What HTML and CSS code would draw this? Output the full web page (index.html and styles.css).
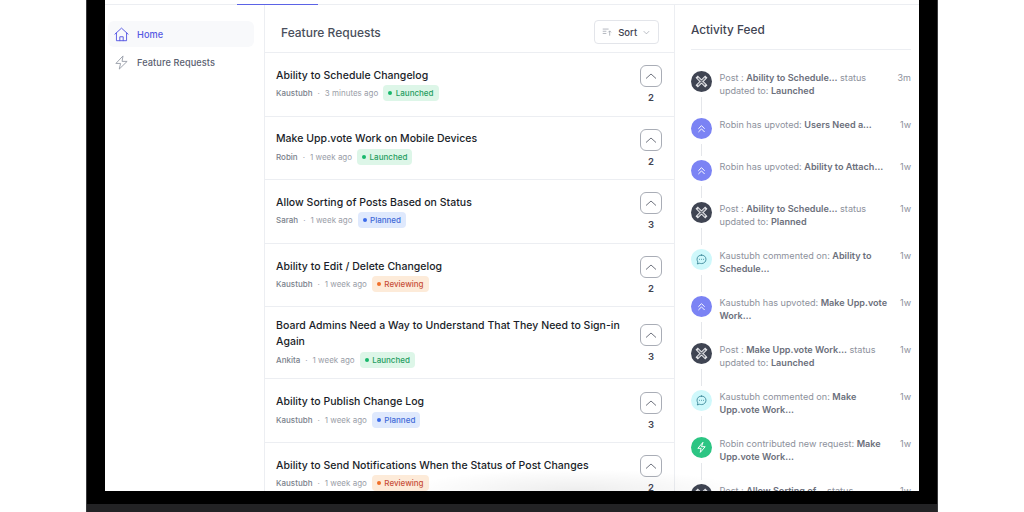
FILE: index.html
```html
<!DOCTYPE html>
<html lang="en">
<head>
  <meta charset="UTF-8">
  <title>Feature Requests</title>
  <link rel="stylesheet" href="styles.css">
</head>
<body>
  <div class="laptop">
    <div class="screen">
      <!-- Top tabs -->
      <div class="tabs"><span class="tab-active"></span></div>

      <div class="columns">
        <!-- Sidebar -->
        <nav class="sidebar">
          <a class="nav-item active">
            <svg class="nav-icon" viewBox="0 0 16 16" fill="none" stroke="currentColor" stroke-width="1" stroke-linejoin="round" stroke-linecap="round"><path d="M1 7.600 8 1.200l7 6.400"/><path d="M2.600 6.400v8.200h10.800V6.400"/><path d="M6.200 14.600v-4.200h3.600v4.200"/></svg>
            Home
          </a>
          <a class="nav-item">
            <svg class="nav-icon" viewBox="0 0 16 16" fill="none" stroke="currentColor" stroke-width="1" stroke-linejoin="round"><path d="M9.600 1 2 9h5l-1.400 6L14 6.800H8.600z"/></svg>
            Feature Requests
          </a>
        </nav>

        <!-- Feature requests -->
        <main class="requests">
          <header class="requests-head">
            <h2>Feature Requests</h2>
            <button class="sort">
              <svg class="sort-icon" viewBox="0 0 14 12" fill="none" stroke="currentColor" stroke-width="1"><path d="M1 2h8M1 5h5M1 8h5M10.500 11V4.500M8.500 6.500l2-2 2 2"/></svg>
              Sort
              <svg class="sort-caret" viewBox="0 0 10 6" fill="none" stroke="currentColor" stroke-width="1"><path d="M1 1l4 4 4-4"/></svg>
            </button>
          </header>

          <article class="request">
            <div class="request-body">
              <h3>Ability to Schedule Changelog</h3>
              <div class="meta"><b>Kaustubh</b><i>·</i><span>3 minutes ago</span><em class="badge launched">Launched</em></div>
            </div>
            <div class="vote"><span class="vote-btn"><svg viewBox="0 0 12 6"><path d="M1 5.500 6 1l5 4.500"/></svg></span><strong>2</strong></div>
          </article>

          <article class="request">
            <div class="request-body">
              <h3>Make Upp.vote Work on Mobile Devices</h3>
              <div class="meta"><b>Robin</b><i>·</i><span>1 week ago</span><em class="badge launched">Launched</em></div>
            </div>
            <div class="vote"><span class="vote-btn"><svg viewBox="0 0 12 6"><path d="M1 5.500 6 1l5 4.500"/></svg></span><strong>2</strong></div>
          </article>

          <article class="request">
            <div class="request-body">
              <h3>Allow Sorting of Posts Based on Status</h3>
              <div class="meta"><b>Sarah</b><i>·</i><span>1 week ago</span><em class="badge planned">Planned</em></div>
            </div>
            <div class="vote"><span class="vote-btn"><svg viewBox="0 0 12 6"><path d="M1 5.500 6 1l5 4.500"/></svg></span><strong>3</strong></div>
          </article>

          <article class="request">
            <div class="request-body">
              <h3>Ability to Edit / Delete Changelog</h3>
              <div class="meta"><b>Kaustubh</b><i>·</i><span>1 week ago</span><em class="badge reviewing">Reviewing</em></div>
            </div>
            <div class="vote"><span class="vote-btn"><svg viewBox="0 0 12 6"><path d="M1 5.500 6 1l5 4.500"/></svg></span><strong>2</strong></div>
          </article>

          <article class="request">
            <div class="request-body">
              <h3>Board Admins Need a Way to Understand That They Need to Sign-in Again</h3>
              <div class="meta"><b>Ankita</b><i>·</i><span>1 week ago</span><em class="badge launched">Launched</em></div>
            </div>
            <div class="vote"><span class="vote-btn"><svg viewBox="0 0 12 6"><path d="M1 5.500 6 1l5 4.500"/></svg></span><strong>3</strong></div>
          </article>

          <article class="request">
            <div class="request-body">
              <h3>Ability to Publish Change Log</h3>
              <div class="meta"><b>Kaustubh</b><i>·</i><span>1 week ago</span><em class="badge planned">Planned</em></div>
            </div>
            <div class="vote"><span class="vote-btn"><svg viewBox="0 0 12 6"><path d="M1 5.500 6 1l5 4.500"/></svg></span><strong>3</strong></div>
          </article>

          <article class="request">
            <div class="request-body">
              <h3>Ability to Send Notifications When the Status of Post Changes</h3>
              <div class="meta"><b>Kaustubh</b><i>·</i><span>1 week ago</span><em class="badge reviewing">Reviewing</em></div>
            </div>
            <div class="vote"><span class="vote-btn"><svg viewBox="0 0 12 6"><path d="M1 5.500 6 1l5 4.500"/></svg></span><strong>2</strong></div>
          </article>
        </main>

        <!-- Activity feed -->
        <aside class="activity">
          <h2>Activity Feed</h2>
          <ul class="feed">
            <li class="feed-item">
              <span class="dot dot-status"><svg viewBox="0 0 16 16"><path class="tool-out" d="M3.500 3.500l9 9M12.500 3.500l-9 9"/><path class="tool-in" d="M4 4l8 8M12 4l-8 8"/></svg></span>
              <p>Post : <b>Ability to Schedule…</b> status updated to: <b>Launched</b></p>
              <time>3m</time>
            </li>
            <li class="feed-item">
              <span class="dot dot-vote"><svg viewBox="0 0 16 16"><path d="M4.500 8 8 4.500 11.500 8M4.500 12 8 8.500l3.500 3.500"/></svg></span>
              <p>Robin has upvoted: <b>Users Need a…</b></p>
              <time>1w</time>
            </li>
            <li class="feed-item">
              <span class="dot dot-vote"><svg viewBox="0 0 16 16"><path d="M4.500 8 8 4.500 11.500 8M4.500 12 8 8.500l3.500 3.500"/></svg></span>
              <p>Robin has upvoted: <b>Ability to Attach…</b></p>
              <time>1w</time>
            </li>
            <li class="feed-item">
              <span class="dot dot-status"><svg viewBox="0 0 16 16"><path class="tool-out" d="M3.500 3.500l9 9M12.500 3.500l-9 9"/><path class="tool-in" d="M4 4l8 8M12 4l-8 8"/></svg></span>
              <p>Post : <b>Ability to Schedule…</b> status updated to: <b>Planned</b></p>
              <time>1w</time>
            </li>
            <li class="feed-item">
              <span class="dot dot-comment"><svg viewBox="0 0 16 16"><path d="M8 2.500c3.200 0 5.500 2.300 5.500 5.200S11.200 13 8 13c-.8 0-1.500-.1-2.200-.4L2.800 13.500l.8-2.400C3 10.100 2.500 9 2.500 7.700 2.500 4.800 4.800 2.500 8 2.500zM5.500 7.800h.1M8 7.800h.1M10.500 7.800h.1"/></svg></span>
              <p>Kaustubh commented on: <b>Ability to Schedule…</b></p>
              <time>1w</time>
            </li>
            <li class="feed-item">
              <span class="dot dot-vote"><svg viewBox="0 0 16 16"><path d="M4.500 8 8 4.500 11.500 8M4.500 12 8 8.500l3.500 3.500"/></svg></span>
              <p>Kaustubh has upvoted: <b>Make Upp.vote Work…</b></p>
              <time>1w</time>
            </li>
            <li class="feed-item">
              <span class="dot dot-status"><svg viewBox="0 0 16 16"><path class="tool-out" d="M3.500 3.500l9 9M12.500 3.500l-9 9"/><path class="tool-in" d="M4 4l8 8M12 4l-8 8"/></svg></span>
              <p>Post : <b>Make Upp.vote Work…</b> status updated to: <b>Launched</b></p>
              <time>1w</time>
            </li>
            <li class="feed-item">
              <span class="dot dot-comment"><svg viewBox="0 0 16 16"><path d="M8 2.500c3.200 0 5.500 2.300 5.500 5.200S11.200 13 8 13c-.8 0-1.500-.1-2.200-.4L2.800 13.500l.8-2.400C3 10.100 2.500 9 2.500 7.700 2.500 4.800 4.800 2.500 8 2.500zM5.500 7.800h.1M8 7.800h.1M10.500 7.800h.1"/></svg></span>
              <p>Kaustubh commented on: <b>Make Upp.vote Work…</b></p>
              <time>1w</time>
            </li>
            <li class="feed-item">
              <span class="dot dot-new"><svg viewBox="0 0 16 16"><path d="M9.500 2 3.500 9h4l-1 5 6-7h-4z"/></svg></span>
              <p>Robin contributed new request: <b>Make Upp.vote Work…</b></p>
              <time>1w</time>
            </li>
            <li class="feed-item">
              <span class="dot dot-status"><svg viewBox="0 0 16 16"><path class="tool-out" d="M3.500 3.500l9 9M12.500 3.500l-9 9"/><path class="tool-in" d="M4 4l8 8M12 4l-8 8"/></svg></span>
              <p>Post : <b>Allow Sorting of…</b> status updated to: <b>Planned</b></p>
              <time>1w</time>
            </li>
          </ul>
        </aside>
      </div>
      <div class="screen-fade"></div>
    </div>
    <div class="laptop-base"></div>
  </div>
</body>
</html>
```

FILE: styles.css
```css
/* General Styles */
* {
  box-sizing: border-box;
}

html, body {
  height: 512px;
  overflow: hidden;
}

body {
  margin: 0;
  background-color: #FFFFFF;
  font-family: 'Inter', sans-serif;
  color: #1F2430;
}

h2, h3, p, ul {
  margin: 0;
  padding: 0;
}

/* Laptop frame */
.laptop {
  width: 852px;
  height: 512px;
  margin-left: 86px;
  background-color: #000000;
  border-left: 1px solid #3A3A3C;
  border-right: 1px solid #3A3A3C;
  display: flex;
  flex-direction: column;
  align-items: center;
}

.screen {
  position: relative;
  width: 814px;
  height: 491px;
  flex: none;
  background-color: #FFFFFF;
  display: flex;
  flex-direction: column;
  overflow: hidden;
}

/* soft shadow over the bottom of the screen */
.screen-fade {
  position: absolute;
  left: 300px;
  bottom: 0;
  width: 340px;
  height: 22px;
  background: radial-gradient(ellipse 50% 100% at 50% 100%, rgba(0, 0, 0, 0.07), rgba(0, 0, 0, 0));
}

.laptop-base {
  margin-top: 13px;
  flex: 1;
  width: 100%;
  background-color: #232325;
}

/* Top tabs */
.tabs {
  height: 5px;
  flex: none;
  border-bottom: 1px solid #ECEEF2;
  padding-left: 132px;
}

.tab-active {
  display: block;
  width: 81px;
  height: 5px;
  border-bottom: 1px solid #5B63E6;
}

.columns {
  flex: 1;
  display: flex;
  min-height: 0;
}

/* Sidebar */
.sidebar {
  width: 160px;
  flex: none;
  border-right: 1px solid #ECEEF2;
  padding: 16px 10px 0 3px;
  display: flex;
  flex-direction: column;
  gap: 2px;
}

.nav-item {
  height: 26px;
  display: flex;
  align-items: center;
  gap: 8px;
  padding-left: 6px;
  border-radius: 6px;
  font-size: 9.200px;
  font-weight: 500;
  letter-spacing: 0.1px;
  color: #5A6070;
}

.nav-item.active {
  background-color: #F8F9FB;
  color: #5558E3;
}

.nav-item:not(.active) .nav-icon {
  color: #9A9FAA;
}

.nav-icon {
  width: 15px;
  height: 15px;
  flex: none;
}

/* Feature requests */
.requests {
  width: 410px;
  flex: none;
  border-right: 1px solid #ECEEF2;
  overflow: hidden;
}

.requests-head {
  height: 48px;
  border-bottom: 1px solid #ECEEF2;
  display: flex;
  align-items: center;
  justify-content: space-between;
  padding: 7px 15px 0 16px;
}

.requests-head h2 {
  font-size: 12px;
  font-weight: 500;
  color: #4A4F5C;
}

.sort {
  width: 65px;
  height: 24px;
  padding: 0 8px 0 7px;
  display: flex;
  align-items: center;
  gap: 6px;
  background-color: #FFFFFF;
  border: 1px solid #E3E5EA;
  border-radius: 4px;
  font-family: inherit;
  font-size: 9.500px;
  font-weight: 500;
  color: #3F4452;
}

.sort-icon {
  width: 12px;
  height: 10px;
  color: #9A9FAA;
}

.sort-caret {
  width: 8px;
  height: 5px;
  margin-left: auto;
  color: #9A9FAA;
}

.request {
  min-height: 63.600px;
  padding: 10.500px 12px 10.500px 11px;
  border-bottom: 1px solid #ECEEF2;
  display: flex;
  align-items: center;
  gap: 10px;
}

.request-body {
  flex: 1;
  min-width: 0;
  padding-top: 0.600px;
}

.request h3 {
  font-size: 10.500px;
  font-weight: 500;
  letter-spacing: 0.03px;
  line-height: 16px;
  color: #1A1E29;
}

.meta {
  display: flex;
  align-items: center;
  margin-top: 1.400px;
  font-size: 8px;
  color: #9A9EA8;
}

.meta b {
  font-weight: 500;
  color: #7A7F8B;
}

.meta i {
  font-style: normal;
  margin: 0 5px;
}

.badge {
  margin-left: 5px;
  height: 16px;
  padding: 0 5px 0 12.500px;
  border-radius: 4px;
  font-style: normal;
  font-size: 8px;
  font-weight: 500;
  line-height: 16px;
  position: relative;
}

/* status dot */
.badge::before {
  content: "";
  position: absolute;
  left: 5px;
  top: 6px;
  width: 4px;
  height: 4px;
  border-radius: 50%;
  background-color: currentColor;
}

.badge.launched {
  background-color: #DDF6E8;
  color: #1F9D61;
}

.badge.launched::before {
  background-color: #18B76B;
}

.badge.planned {
  background-color: #DFE9FD;
  color: #4169D8;
}

.badge.planned::before {
  background-color: #3B6BEA;
}

.badge.reviewing {
  background-color: #FDEBD9;
  color: #C8503A;
}

.badge.reviewing::before {
  background-color: #F0702A;
}

.vote {
  width: 22px;
  flex: none;
  display: flex;
  flex-direction: column;
  align-items: center;
  gap: 5px;
}

.vote-btn {
  width: 22px;
  height: 22px;
  margin-left: -1px;
  border: 1px solid #A9ADB6;
  border-radius: 6px;
  display: flex;
  align-items: center;
  justify-content: center;
}

.vote-btn svg {
  width: 12px;
  height: 6px;
  fill: none;
  stroke: #6F737E;
  stroke-width: 1;
}

.vote strong {
  font-size: 9.500px;
  font-weight: 600;
  line-height: 11px;
  color: #3F4452;
}

/* Activity feed */
.activity {
  flex: 1;
  min-width: 0;
  padding: 0 8px 0 16px;
  overflow: hidden;
}

.activity h2 {
  height: 45px;
  padding-top: 18px;
  border-bottom: 1px solid #ECEEF2;
  font-size: 11.800px;
  font-weight: 500;
  line-height: 15px;
  color: #3F4452;
}

.feed {
  list-style: none;
  padding-top: 21px;
}

.feed-item {
  position: relative;
  display: flex;
  gap: 7.500px;
  min-height: 42px;
  padding-bottom: 21px;
}

/* connector between the dots */
.feed-item::after {
  content: "";
  position: absolute;
  left: 10px;
  top: 26px;
  bottom: 4px;
  width: 1px;
  background-color: #E4E6EA;
}

.dot {
  width: 21px;
  height: 21px;
  flex: none;
  border-radius: 50%;
  display: flex;
  align-items: center;
  justify-content: center;
}

.dot svg {
  width: 13px;
  height: 13px;
  fill: none;
  stroke: #FFFFFF;
  stroke-width: 1.200;
  stroke-linecap: round;
  stroke-linejoin: round;
}

.dot-status {
  background-color: #3F4452;
}

.dot-status .tool-out {
  stroke: #E6E7EB;
  stroke-width: 4;
  stroke-linecap: square;
}

.dot-status .tool-in {
  stroke: #6A6E79;
  stroke-width: 1.600;
}

.dot-vote {
  background-color: #7B83F4;
}

.dot-comment {
  background-color: #CFF8FB;
}

.dot-comment svg {
  stroke: #2C7C90;
  stroke-width: 1;
}

.dot-new {
  background-color: #2CC583;
}

.feed-item p {
  flex: 1;
  min-width: 0;
  max-width: 168px;
  font-size: 9.100px;
  line-height: 13px;
  color: #8D919C;
}

.feed-item p b {
  font-weight: 600;
  color: #6C707C;
}

.feed-item time {
  flex: none;
  margin-left: auto;
  font-size: 9px;
  line-height: 13px;
  color: #8D919C;
}
```
